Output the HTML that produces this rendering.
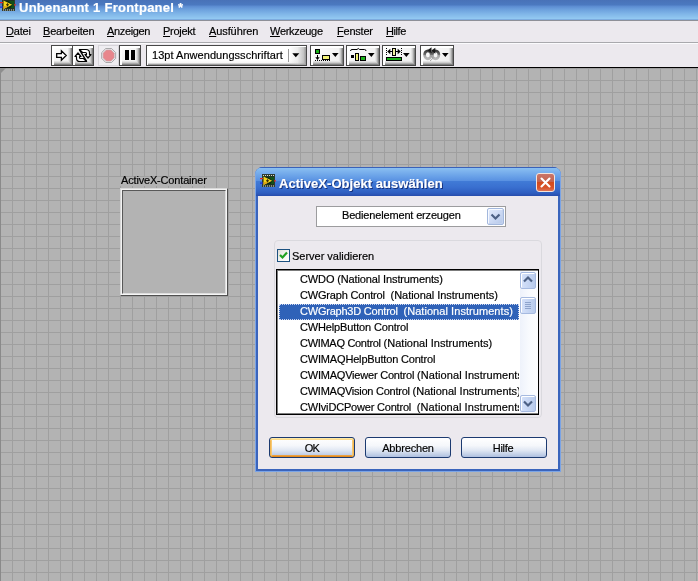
<!DOCTYPE html>
<html lang="de"><head><meta charset="utf-8"><title>Unbenannt 1 Frontpanel</title>
<style>
html,body{margin:0;padding:0}
body{width:698px;height:581px;overflow:hidden;position:relative;background:#b3b3b3;font:11px/13px "Liberation Sans", sans-serif;color:#000}
div,svg{position:absolute;box-sizing:border-box}
.t{white-space:pre;height:13px;line-height:13px;will-change:transform;-webkit-text-stroke-width:0.180px}
u{text-decoration:underline;text-underline-offset:1px;text-decoration-thickness:1px}
#grid{left:0;top:68px;width:698px;height:513px;background-color:#b3b3b3;
 background-image:linear-gradient(to right,#9f9f9f 1px,transparent 1px),linear-gradient(to bottom,#9f9f9f 1px,transparent 1px);background-size:12px 12px}
#title{left:0;top:0;width:698px;height:20px;background:linear-gradient(to bottom,#4872b8 0,#4b79c0 5px,#5a8ad0 6px,#6a9edc 9px,#80b6e8 14px,#92c8f1 18.500px,#80b0e2 19px,#7aa8dc 20px)}
#title .t{color:#fff;font-weight:bold;font-size:13px;height:16px;line-height:16px}
#menu{left:0;top:20px;width:698px;height:23px;background:#ece9ee;border-top:1px solid #8e9098;border-bottom:1px solid #a9a9ad}
#tool{left:0;top:43px;width:698px;height:25px;background:#ece9ee;border-top:1px solid #fbfbfd;border-bottom:1px solid #000}
.tb{border:1px solid #484848;background:linear-gradient(135deg,#ffffff 0,#f6f6f6 40%,#ebebeb 100%);box-shadow:inset 1px 1px 0 #fff,inset 2px 2px 0 #fff,inset -1px -1px 0 #808080,inset -2px -2px 0 #aaaaaa,inset -3px -3px 0 #cdcdcd,inset -4px -4px 0 #e3e3e3}
#dlg{left:255px;top:167px;width:306px;height:305px;border-radius:8px 8px 0 0;background:#2a5bc4;overflow:hidden}
#dtitle{left:0;top:0;width:306px;height:29px;background:linear-gradient(to bottom,#3a62b8 0,#3a62b8 1px,#88bef1 1.500px,#7eb4ee 4px,#6aa2e8 9px,#5a92e2 13.500px,#407ad6 14.500px,#3a70d0 20px,#2e5ec0 26px,#2a52b2 28px,#264cac 29px)}
#dtitle .t{color:#fff;font-weight:bold;font-size:13px;height:16px;line-height:16px;text-shadow:1px 1px 0 #15307a}
#dbody{left:3px;top:29px;width:300px;height:273px;background:#ece9ee}
#dframe{left:0;top:0;width:306px;height:305px;border:1px solid #7aa4e6;border-top:0;pointer-events:none}
.btn{height:21px;width:86px;border:1px solid #1c3a70;border-radius:3px;background:linear-gradient(to bottom,#ffffff 0,#f5f7fb 40%,#e0e7f3 65%,#c4d1e8 85%,#aebfdf 100%);text-align:center}
.btn .t{position:absolute;left:0;width:100%;top:3px;text-align:center}
</style></head>
<body>
<div id="grid"></div>
<div style="left:0;top:68px;width:1px;height:513px;background:#8a8a8a"></div>
<svg style="left:0;top:68px" width="6" height="6"><polygon points="0,0 6,0 0,6" fill="#8e8e8e"/></svg>
<div id="title">
<svg style="left:0px;top:-2px" width="16" height="14" viewBox="0 0 16 14">
<rect x="2" y="0" width="13" height="13" fill="#2e3a30"/>
<rect x="3" y="2.500" width="11" height="8" fill="#0e2a12"/>
<rect x="0" y="4" width="3" height="1.200" fill="#e02828"/><rect x="0" y="8.500" width="3" height="1.200" fill="#1c2cd8"/>
<rect x="13" y="6.300" width="3" height="1.200" fill="#e02828"/>
<rect x="3" y="1" width="1" height="1" fill="#dcdcc8"/><rect x="5" y="1" width="1" height="1" fill="#dcdcc8"/><rect x="7" y="1" width="1" height="1" fill="#dcdcc8"/><rect x="9" y="1" width="1" height="1" fill="#dcdcc8"/><rect x="11" y="1" width="1" height="1" fill="#dcdcc8"/><rect x="13" y="1" width="1" height="1" fill="#dcdcc8"/>
<polygon points="8.500,3 14,3 14,10 10.500,10 12.500,6.800" fill="#12501a"/>
<polygon points="3.500,2.500 3.500,11 12.200,6.800" fill="#f4d41c"/>
<polygon points="3.500,8 3.500,11 9,8.300" fill="#e0a818"/>
<path d="M7.500 5.300 V8.300 M6 6.800 H9" stroke="#3c3008" stroke-width="1.100"/>
<rect x="3" y="11.5" width="1" height="1" fill="#dcdcc8"/><rect x="5" y="11.5" width="1" height="1" fill="#dcdcc8"/><rect x="7" y="11.5" width="1" height="1" fill="#dcdcc8"/><rect x="9" y="11.5" width="1" height="1" fill="#dcdcc8"/><rect x="11" y="11.5" width="1" height="1" fill="#dcdcc8"/><rect x="13" y="11.5" width="1" height="1" fill="#dcdcc8"/>
</svg>
<div class="t" id="wt" style="left:18.7px;top:-0.5px;letter-spacing:0.258px;">Unbenannt 1 Frontpanel *</div>
</div>
<div id="menu">
<div class="t" id="m0" style="left:6.3px;top:4px;letter-spacing:-0.200px;"><u>D</u>atei</div>
<div class="t" id="m1" style="left:42.8px;top:4px;letter-spacing:-0.176px;"><u>B</u>earbeiten</div>
<div class="t" id="m2" style="left:106.8px;top:4px;letter-spacing:-0.343px;"><u>A</u>nzeigen</div>
<div class="t" id="m3" style="left:162.8px;top:4px;letter-spacing:-0.267px;"><u>P</u>rojekt</div>
<div class="t" id="m4" style="left:208.8px;top:4px;letter-spacing:-0.100px;"><u>A</u>usführen</div>
<div class="t" id="m5" style="left:270.3px;top:4px;letter-spacing:-0.300px;"><u>W</u>erkzeuge</div>
<div class="t" id="m6" style="left:336.64px;top:4px;letter-spacing:-0.211px;"><u>F</u>enster</div>
<div class="t" id="m7" style="left:385.96px;top:4px;letter-spacing:-0.440px;"><u>H</u>ilfe</div>
</div>
<div id="tool">
<div class="tb" style="left:51px;top:1px;width:22px;height:21px;"><svg style="left:0;top:0" width="20" height="19" viewBox="0 0 20 19"><path d="M4.700 7.600 H9.400 V4.700 L14.200 9.450 L9.400 14.200 V11.300 H4.700 Z" fill="#fff" stroke="#000" stroke-width="1.300" stroke-linejoin="miter"/></svg></div>
<div class="tb" style="left:72px;top:1px;width:22px;height:21px;"><svg style="left:0;top:0" width="20" height="19" viewBox="0 0 20 19">
<path d="M6.500 3.500 H13 Q16.500 3.500 16.500 6.800 V8.500 H18 L15 12 L12 8.500 H13.500 V7.500 Q13.500 6.500 12.500 6.500 H9.500 Z" fill="#fff" stroke="#000" stroke-width="1.200" stroke-linejoin="round"/>
<path d="M6.500 3.500 H13 Q16.500 3.500 16.500 6.800 V8.500 H18 L15 12 L12 8.500 H13.500 V7.500 Q13.500 6.500 12.500 6.500 H9.500 Z" fill="#fff" stroke="#000" stroke-width="1.200" stroke-linejoin="round" transform="rotate(180 10 9.500)"/>
<path d="M6.300 3.300 L13.700 15.700" stroke="#000" stroke-width="1.400"/>
</svg></div>
<div class="" style="left:98px;top:1px;width:21px;height:21px;border:1px solid #d6d4d9;background:#efedf1"><svg style="left:0;top:0" width="19" height="19" viewBox="0 0 19 19">
<polygon points="6.75,2.50 12.55,2.50 16.65,6.60 16.65,12.40 12.55,16.50 6.75,16.50 2.65,12.40 2.65,6.60" fill="#e9e7ea" stroke="#8c8c8c" stroke-width="0.700"/>
<polygon points="7.37,4.00 11.93,4.00 15.15,7.22 15.15,11.78 11.93,15.00 7.37,15.00 4.15,11.78 4.15,7.22" fill="#e8868c" stroke="#c8a0a4" stroke-width="0.600"/>
</svg></div>
<div class="tb" style="left:119px;top:1px;width:22px;height:21px;"><svg style="left:0;top:0" width="20" height="19"><rect x="5" y="4" width="4" height="10" fill="#000"/><rect x="11" y="4" width="4" height="10" fill="#000"/></svg></div>
<div class="tb" style="left:146px;top:1px;width:161px;height:21px;background:linear-gradient(to bottom,#fff 0,#fff 70%,#f0f0f0 100%);box-shadow:inset 1px 1px 0 #fff,inset -1px -1px 0 #9c9c9c,inset -2px -2px 0 #d4d4d4"><div style="left:142px;top:1px;width:17px;height:18px;background:linear-gradient(to right,rgba(255,255,255,0) 0,rgba(200,200,200,0.350) 50%,rgba(160,160,160,0.800) 100%)"></div><div style="left:141px;top:3px;width:1px;height:13px;background:#9a9a9a"></div><svg style="left:145px;top:7px" width="9" height="6"><polygon points="0.300,0.300 7.300,0.300 3.800,4.300" fill="#000"/></svg><div class="t" id="fontring" style="left:4.68px;top:3px;letter-spacing:0.044px;">13pt Anwendungsschriftart</div></div>
<div class="tb" style="left:310px;top:1px;width:34px;height:21px;"><svg style="left:0;top:0" width="32" height="19" viewBox="0 0 32 19">
<rect x="4.500" y="3.500" width="4" height="4" fill="#18b018" stroke="#000"/>
<path d="M6.500 9 V13" stroke="#000"/><polygon points="4.300,11.300 8.700,11.300 6.500,14" fill="#000"/>
<path d="M4 14.500 H19" stroke="#000" stroke-dasharray="1 1"/>
<rect x="11.500" y="9.500" width="7" height="4" fill="#f2f276" stroke="#000"/>
</svg><svg style="left:20.5px;top:7px" width="8" height="5"><polygon points="0,0 6.600,0 3.300,3.900" fill="#000"/></svg></div>
<div class="tb" style="left:346px;top:1px;width:34px;height:21px;"><svg style="left:0;top:0" width="32" height="19" viewBox="0 0 32 19">
<path d="M3.500 5 Q3.500 3.500 5 3.500 H10 L11.300 2.500 L12.600 3.500 H17.500 Q19 3.500 19 5" stroke="#000" fill="none"/>
<rect x="4" y="9" width="3" height="3" fill="#000"/>
<rect x="8.500" y="7.500" width="3" height="7" fill="#f2f276" stroke="#000"/>
<rect x="13.500" y="10.500" width="5" height="4" fill="#18b018" stroke="#000"/>
</svg><svg style="left:20.5px;top:7px" width="8" height="5"><polygon points="0,0 6.600,0 3.300,3.900" fill="#000"/></svg></div>
<div class="tb" style="left:382px;top:1px;width:34px;height:21px;"><svg style="left:0;top:0" width="32" height="19" viewBox="0 0 32 19">
<path d="M3.500 2 V10 M18.500 2 V10" stroke="#000" stroke-dasharray="1 1"/>
<path d="M5 5.500 H9 M13 5.500 H17" stroke="#000"/>
<polygon points="4.300,5.500 7.300,2.800 7.300,8.200" fill="#000"/><polygon points="17.700,5.500 14.700,2.800 14.700,8.200" fill="#000"/>
<rect x="9.500" y="2.500" width="3" height="7" fill="#f0f0a0" stroke="#000"/>
<rect x="3.500" y="11.500" width="15" height="3" fill="#18b018" stroke="#000"/>
</svg><svg style="left:20px;top:7px" width="8" height="5"><polygon points="0,0 6.600,0 3.300,3.900" fill="#000"/></svg></div>
<div class="tb" style="left:420px;top:1px;width:34px;height:21px;"><svg style="left:0;top:0" width="32" height="19" viewBox="0 0 32 19">
<defs><linearGradient id="rg" x1="0" y1="0" x2="0" y2="1"><stop offset="0" stop-color="#3c3c3c"/><stop offset="0.450" stop-color="#6a6a6a"/><stop offset="0.600" stop-color="#a6a6a6"/><stop offset="1" stop-color="#b8b8b8"/></linearGradient></defs>
<ellipse cx="6.900" cy="8.800" rx="3.300" ry="4" fill="none" stroke="url(#rg)" stroke-width="2.700"/>
<ellipse cx="14.600" cy="8.800" rx="3.300" ry="4" fill="none" stroke="url(#rg)" stroke-width="2.700"/>
<polygon points="6.500,4.200 10.500,1.300 10.500,7.300" fill="#1a1a1a"/><polygon points="10.300,4.600 14.300,1.700 14.300,7.700" fill="#1a1a1a"/>
<path d="M9 9.500 L12.300 12 L9 15" stroke="#9a9a9a" stroke-width="0.900" fill="none"/>
</svg><svg style="left:20.5px;top:7px" width="8" height="5"><polygon points="0,0 6.600,0 3.300,3.900" fill="#000"/></svg></div>
</div>
<div style="left:120px;top:177px;width:89px;height:9px;background:#b3b3b3"></div>
<div class="t" id="axl" style="left:120.64px;top:174px;letter-spacing:-0.170px;">ActiveX-Container</div>
<div style="left:120px;top:188px;width:108px;height:108px;background:#b3b3b3;border:1px solid;border-color:#d8d8d8 #505050 #505050 #d8d8d8"><div style="left:0;top:0;width:106px;height:106px;border:1px solid;border-color:#f2f2f2 #f6f6f6 #f6f6f6 #f2f2f2"><div style="left:0;top:0;width:104px;height:104px;border:1px solid;border-color:#585858 #dedede #dedede #585858"></div></div></div>
<div id="dlg">
<div id="dtitle">
<svg style="left:4.8px;top:7.3px" width="16" height="14" viewBox="0 0 16 14">
<rect x="2" y="0" width="13" height="13" fill="#2e3a30"/>
<rect x="3" y="2.500" width="11" height="8" fill="#0e2a12"/>
<rect x="0" y="4" width="3" height="1.200" fill="#e02828"/><rect x="0" y="8.500" width="3" height="1.200" fill="#1c2cd8"/>
<rect x="13" y="6.300" width="3" height="1.200" fill="#e02828"/>
<rect x="3" y="1" width="1" height="1" fill="#dcdcc8"/><rect x="5" y="1" width="1" height="1" fill="#dcdcc8"/><rect x="7" y="1" width="1" height="1" fill="#dcdcc8"/><rect x="9" y="1" width="1" height="1" fill="#dcdcc8"/><rect x="11" y="1" width="1" height="1" fill="#dcdcc8"/><rect x="13" y="1" width="1" height="1" fill="#dcdcc8"/>
<polygon points="8.500,3 14,3 14,10 10.500,10 12.500,6.800" fill="#12501a"/>
<polygon points="3.500,2.500 3.500,11 12.200,6.800" fill="#f4d41c"/>
<polygon points="3.500,8 3.500,11 9,8.300" fill="#e0a818"/>
<path d="M7.500 5.300 V8.300 M6 6.800 H9" stroke="#3c3008" stroke-width="1.100"/>
<rect x="3" y="11.5" width="1" height="1" fill="#dcdcc8"/><rect x="5" y="11.5" width="1" height="1" fill="#dcdcc8"/><rect x="7" y="11.5" width="1" height="1" fill="#dcdcc8"/><rect x="9" y="11.5" width="1" height="1" fill="#dcdcc8"/><rect x="11" y="11.5" width="1" height="1" fill="#dcdcc8"/><rect x="13" y="11.5" width="1" height="1" fill="#dcdcc8"/>
</svg>
<div class="t" id="dt" style="left:23.7px;top:8.5px;letter-spacing:0.049px;">ActiveX-Objekt auswählen</div>
<div style="left:281px;top:6px;width:19px;height:19px;border:1px solid #f4e4dc;border-radius:3px;background:linear-gradient(to bottom,#c9766a 0,#c4634e 45%,#d24a1c 50%,#d8532a 80%,#dd7455 100%)">
<svg style="left:0;top:0" width="17" height="17"><path d="M4.500 4.500 L12.500 12.500 M12.500 4.500 L4.500 12.500" stroke="#fff" stroke-width="2.1" stroke-linecap="round"/></svg></div>
</div>
<div id="dbody">
<div style="left:58px;top:10px;width:190px;height:21px;border:1px solid #9c9c9e;background:#fff"><div class="t" id="combo" style="left:24.7px;top:2px;letter-spacing:-0.165px;">Bedienelement erzeugen</div><div style="left:170px;top:1px;width:17px;height:17px;border:1px solid #a3b8dd;border-radius:2px;background:linear-gradient(135deg,#e4ecfc 0,#d0dcf5 45%,#b4c7e8 100%);box-shadow:inset 1px 1px 0 #f6f9ff,inset -1px -1px 0 #c4d2ee"><svg style="left:0;top:0" width="15" height="15"><path d="M3.500 5.500 L7.500 9.500 L11.500 5.500" stroke="#4d6185" stroke-width="2.2" fill="none"/></svg></div></div>
<div style="left:16px;top:44px;width:268px;height:178px;border:1px solid #dad9de;border-radius:4px"></div>
<div style="left:19px;top:53px;width:13px;height:13px;border:1px solid #1c5180;background:linear-gradient(135deg,#dcdcd6 0,#f4f4f0 50%,#fff 100%)"><svg style="left:0;top:0" width="11" height="11"><path d="M2 5 L4.500 7.500 L9 2.500" stroke="#21a121" stroke-width="2.2" fill="none"/></svg></div>
<div class="t" id="sv" style="left:34.2px;top:54px;letter-spacing:-0.020px;">Server validieren</div>
<div style="left:18px;top:73px;width:263px;height:146px;border:1px solid #7c7c7c;border-width:2px 1px 2px 2px;background:#fff;overflow:hidden">
<div style="left:1px;top:1px;width:240px;height:142px;overflow:hidden">
<div class="t" id="li0" style="left:21.34px;top:0.5px;letter-spacing:-0.124px;">CWDO (National Instruments)</div>
<div class="t" id="li1" style="left:21.34px;top:16.5px;letter-spacing:-0.045px;"><span style="letter-spacing:-0.175px">CWGraph Control  </span>(National Instruments)</div>
<div style="left:0;top:32px;width:240px;height:16px;background:#2f62b8;outline:1px dotted #d0d8f0;outline-offset:-1px"></div>
<div class="t" id="li2" style="left:20.54px;top:32.5px;letter-spacing:0.060px;color:#fff;"><span style="letter-spacing:-0.220px">CWGraph3D Control  </span>(National Instruments)</div>
<div class="t" id="li3" style="left:21.34px;top:48.5px;letter-spacing:-0.146px;">CWHelpButton Control</div>
<div class="t" id="li4" style="left:21.34px;top:64.5px;letter-spacing:0.020px;"><span style="letter-spacing:-0.300px">CWIMAQ Control </span>(National Instruments)</div>
<div class="t" id="li5" style="left:21.34px;top:80.5px;letter-spacing:-0.174px;">CWIMAQHelpButton Control</div>
<div class="t" id="li6" style="left:21.21px;top:96.5px;letter-spacing:0.070px;"><span style="letter-spacing:-0.210px">CWIMAQViewer Control </span>(National Instruments)</div>
<div class="t" id="li7" style="left:21.21px;top:112.5px;"><span style="letter-spacing:-0.250px">CWIMAQVision Control </span>(National Instruments)</div>
<div class="t" id="li8" style="left:21.21px;top:128.5px;letter-spacing:0.070px;"><span style="letter-spacing:-0.190px">CWIviDCPower Control  </span>(National Instruments)</div>
</div>
<div style="left:242px;top:0;width:18px;height:143px;background:linear-gradient(to right,#eef2fb 0,#f8fafe 50%,#fdfdff 100%)">
<div style="left:0;top:1px;width:16px;height:17px;border:1px solid #a6bae0;border-radius:2px;background:linear-gradient(to right,#d6e2fa 0,#c4d4f2 60%,#b8caec 100%);box-shadow:inset 1px 1px 0 #fff"><svg style="left:0;top:0" width="14" height="15"><path d="M3 8.500 L7 4.500 L11 8.500" stroke="#4d6185" stroke-width="2.2" fill="none"/></svg></div>
<div style="left:0;top:26px;width:16px;height:17px;border:1px solid #a6bae0;border-radius:2px;background:linear-gradient(to right,#d6e2fa 0,#c4d4f2 60%,#b8caec 100%);box-shadow:inset 1px 1px 0 #fff"><svg style="left:0;top:0" width="14" height="15"><path d="M4 4.500 H10 M4 6.500 H10 M4 8.500 H10 M4 10.500 H10" stroke="#8ea4cc" stroke-width="1"/></svg></div>
<div style="left:0;top:124px;width:16px;height:17px;border:1px solid #a6bae0;border-radius:2px;background:linear-gradient(to right,#d6e2fa 0,#c4d4f2 60%,#b8caec 100%);box-shadow:inset 1px 1px 0 #fff"><svg style="left:0;top:0" width="14" height="15"><path d="M3 5.500 L7 9.500 L11 5.500" stroke="#4d6185" stroke-width="2.2" fill="none"/></svg></div>
</div>
</div>
<div style="left:18px;top:73px;width:263px;height:146px;border:1px solid #000"></div>
<div class="btn" style="left:11px;top:241px;box-shadow:inset 0 1px 0 #fee9a6,inset 1px 0 0 #f2b650,inset -1px 0 0 #f2b650,inset 0 -1px 0 #e38a1e,inset 0 2px 0 #fddc8c,inset 2px 0 0 #f6c873,inset -2px 0 0 #f6c873,inset 0 -2px 0 #e9a042"><div class="t" id="b0" style="left:-0.2px;top:4px;letter-spacing:-0.700px;width:84px;text-align:center;">OK</div></div>
<div class="btn" style="left:107px;top:241px"><div class="t" id="b1" style="left:0.16px;top:4px;letter-spacing:-0.180px;width:84px;text-align:center;">Abbrechen</div></div>
<div class="btn" style="left:203px;top:241px"><div class="t" id="b2" style="left:-1.12px;top:4px;letter-spacing:-0.320px;width:84px;text-align:center;">Hilfe</div></div>
</div>
<div style="left:1px;top:29px;width:304px;height:275px;border:2px solid #3a64bc;border-top:0;background:transparent"></div>
<div id="dframe"></div>
</div>
</body></html>
